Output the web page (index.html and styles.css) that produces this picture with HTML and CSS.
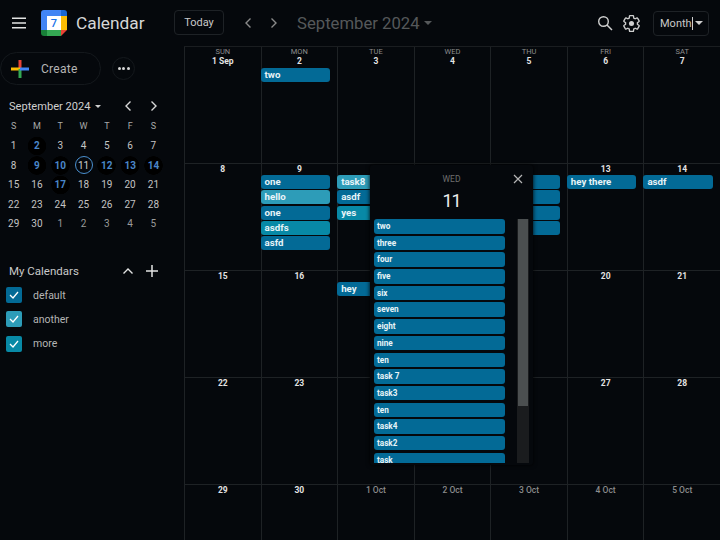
FILE: index.html
```html
<!DOCTYPE html>
<html>
<head>
    <meta http-equiv="Content-Type" content="text/html; charset=UTF-8">
    <title>Calendar</title>
    <link rel="stylesheet" href="styles.css">
</head>
<body>
<header class="topbar">
    <svg class="menu-icon" width="16" height="12" viewBox="0 0 16 12"><path d="M1 1.200h14M1 6h14M1 10.800h14" stroke="#e3e3e3" stroke-width="1.600"/></svg>
    <svg class="logo" width="26" height="26" viewBox="0 0 26 26">
        <path d="M3 0h17v6H6v14H0V3a3 3 0 0 1 3-3z" fill="#4285f4"/>
        <path d="M20 0h3a3 3 0 0 1 3 3v3h-6z" fill="#1967d2"/>
        <rect x="20" y="6" width="6" height="14" fill="#fbbc04"/>
        <path d="M0 20h6v6H3a3 3 0 0 1-3-3z" fill="#188038"/>
        <rect x="6" y="20" width="14" height="6" fill="#34a853"/>
        <path d="M20 20h6l-6 6z" fill="#ea4335"/>
        <rect x="6" y="6" width="14" height="14" fill="#fff"/>
        <text x="13" y="17" text-anchor="middle" class="logo-num">7</text>
    </svg>
    <span class="brand">Calendar</span>
    <button class="btn btn-today">Today</button>
    <svg class="nav-arrow first" width="8" height="12" viewBox="0 0 8 12"><path d="M6.500 1.500L2 6l4.500 4.500" fill="none" stroke="#8a8a8a" stroke-width="1.400"/></svg>
    <svg class="nav-arrow" width="8" height="12" viewBox="0 0 8 12"><path d="M1.500 1.500L6 6l-4.500 4.500" fill="none" stroke="#8a8a8a" stroke-width="1.400"/></svg>
    <span class="title">September 2024</span>
    <span class="caret caret-dim"></span>
    <svg class="search-icon" width="16" height="16" viewBox="0 0 16 16"><circle cx="6.500" cy="6.500" r="4.800" fill="none" stroke="#cfcfcf" stroke-width="1.400"/><path d="M10 10l5 5" stroke="#cfcfcf" stroke-width="1.500"/></svg>
    <svg class="gear-icon" width="19" height="19" viewBox="0 0 24 24"><path d="M19.430 12.980c.040-.320.070-.640.070-.980s-.030-.660-.070-.980l2.110-1.650c.190-.150.240-.420.120-.640l-2-3.460c-.120-.220-.390-.300-.610-.220l-2.490 1c-.520-.400-1.080-.730-1.690-.980l-.380-2.650C14.460 2.180 14.250 2 14 2h-4c-.250 0-.460.180-.490.420l-.380 2.650c-.610.250-1.170.590-1.690.980l-2.490-1c-.230-.090-.490 0-.610.220l-2 3.460c-.130.220-.070.490.120.640l2.110 1.650c-.040.320-.070.650-.070.980s.030.660.070.980l-2.110 1.650c-.190.150-.240.420-.120.640l2 3.460c.120.220.390.300.610.220l2.490-1c.520.400 1.080.730 1.690.980l.380 2.650c.030.240.240.420.490.420h4c.250 0 .460-.180.490-.420l.380-2.650c.610-.250 1.170-.590 1.690-.980l2.490 1c.230.090.490 0 .610-.220l2-3.460c.120-.220.070-.490-.120-.640l-2.110-1.650z" fill="none" stroke="#cfcfcf" stroke-width="1.700"/><circle cx="12" cy="12" r="3.200" fill="#cfcfcf"/></svg>
    <button class="btn btn-month"><span class="month-text">Month</span><span class="caret"></span></button>
</header>
<div class="main">
    <aside class="sidebar">
        <div class="create-row">
            <button class="create">
                <svg width="20" height="20" viewBox="0 0 20 20">
                    <rect x="8.500" y="1" width="3" height="9" fill="#ea4335"/>
                    <rect x="1" y="8.500" width="9" height="3" fill="#fbbc04"/>
                    <rect x="8.500" y="10" width="3" height="9" fill="#34a853"/>
                    <rect x="10" y="8.500" width="9" height="3" fill="#4285f4"/>
                </svg>
                <span>Create</span>
            </button>
            <button class="more"><i></i><i></i><i></i></button>
        </div>
        <div class="mini-head">
            <span class="mini-title">September 2024</span>
            <span class="caret caret-small"></span>
            <svg class="mini-prev" width="8" height="12" viewBox="0 0 8 12"><path d="M6.500 1.500L2 6l4.500 4.500" fill="none" stroke="#d8d8d8" stroke-width="1.400"/></svg>
            <svg class="mini-next" width="8" height="12" viewBox="0 0 8 12"><path d="M1.500 1.500L6 6l-4.500 4.500" fill="none" stroke="#d8d8d8" stroke-width="1.400"/></svg>
        </div>
        <div class="mini-grid">
            <span class="wd">S</span><span class="wd">M</span><span class="wd">T</span><span class="wd">W</span><span class="wd">T</span><span class="wd">F</span><span class="wd">S</span>
            <span>1</span><span class="has">2</span><span>3</span><span>4</span><span>5</span><span>6</span><span>7</span>
            <span>8</span><span class="has">9</span><span class="has">10</span><span class="now">11</span><span class="has">12</span><span class="has">13</span><span class="has">14</span>
            <span>15</span><span>16</span><span class="has">17</span><span>18</span><span>19</span><span>20</span><span>21</span>
            <span>22</span><span>23</span><span>24</span><span>25</span><span>26</span><span>27</span><span>28</span>
            <span>29</span><span>30</span><span class="off">1</span><span class="off">2</span><span class="off">3</span><span class="off">4</span><span class="off">5</span>
        </div>
        <div class="cal-head">
            <span class="cal-title">My Calendars</span>
            <svg class="cal-up" width="12" height="8" viewBox="0 0 12 8"><path d="M1.500 6.500L6 2l4.500 4.500" fill="none" stroke="#e3e3e3" stroke-width="1.400"/></svg>
            <svg class="cal-add" width="12" height="12" viewBox="0 0 12 12"><path d="M6 0v12M0 6h12" stroke="#e3e3e3" stroke-width="1.500"/></svg>
        </div>
        <label class="cal-item"><span class="check c-blue"><svg width="10" height="8" viewBox="0 0 10 8"><path d="M1 4l3 3 5-6" fill="none" stroke="#fff" stroke-width="1.300"/></svg></span>default</label>
        <label class="cal-item"><span class="check c-light"><svg width="10" height="8" viewBox="0 0 10 8"><path d="M1 4l3 3 5-6" fill="none" stroke="#fff" stroke-width="1.300"/></svg></span>another</label>
        <label class="cal-item"><span class="check c-teal"><svg width="10" height="8" viewBox="0 0 10 8"><path d="M1 4l3 3 5-6" fill="none" stroke="#fff" stroke-width="1.300"/></svg></span>more</label>
    </aside>
    <section class="month">
        <div class="cell"><div class="dow">SUN</div><div class="num">1 Sep</div></div>
        <div class="cell"><div class="dow">MON</div><div class="num">2</div><div class="ev">two</div></div>
        <div class="cell"><div class="dow">TUE</div><div class="num">3</div></div>
        <div class="cell"><div class="dow">WED</div><div class="num">4</div></div>
        <div class="cell"><div class="dow">THU</div><div class="num">5</div></div>
        <div class="cell"><div class="dow">FRI</div><div class="num">6</div></div>
        <div class="cell"><div class="dow">SAT</div><div class="num">7</div></div>

        <div class="cell"><div class="num">8</div></div>
        <div class="cell"><div class="num">9</div><div class="ev">one</div><div class="ev light">hello</div><div class="ev">one</div><div class="ev teal">asdfs</div><div class="ev">asfd</div></div>
        <div class="cell"><div class="num"></div><div class="ev light">task8</div><div class="ev">asdf</div><div class="ev teal">yes</div></div>
        <div class="cell"><div class="num"></div></div>
        <div class="cell"><div class="num"></div><div class="ev"></div><div class="ev"></div><div class="ev"></div><div class="ev"></div></div>
        <div class="cell"><div class="num">13</div><div class="ev">hey there</div></div>
        <div class="cell"><div class="num">14</div><div class="ev">asdf</div></div>

        <div class="cell"><div class="num">15</div></div>
        <div class="cell"><div class="num">16</div></div>
        <div class="cell"><div class="num"></div><div class="ev">hey</div></div>
        <div class="cell"><div class="num"></div></div>
        <div class="cell"><div class="num"></div></div>
        <div class="cell"><div class="num">20</div></div>
        <div class="cell"><div class="num">21</div></div>

        <div class="cell"><div class="num">22</div></div>
        <div class="cell"><div class="num">23</div></div>
        <div class="cell"><div class="num"></div></div>
        <div class="cell"><div class="num"></div></div>
        <div class="cell"><div class="num"></div></div>
        <div class="cell"><div class="num">27</div></div>
        <div class="cell"><div class="num">28</div></div>

        <div class="cell"><div class="num">29</div></div>
        <div class="cell"><div class="num">30</div></div>
        <div class="cell"><div class="num dim">1 Oct</div></div>
        <div class="cell"><div class="num dim">2 Oct</div></div>
        <div class="cell"><div class="num dim">3 Oct</div></div>
        <div class="cell"><div class="num dim">4 Oct</div></div>
        <div class="cell"><div class="num dim">5 Oct</div></div>
    </section>
</div>
<div class="popup">
    <svg class="popup-close" width="10" height="10" viewBox="0 0 10 10"><path d="M1 1l8 8M9 1l-8 8" stroke="#b5b5b5" stroke-width="1.200"/></svg>
    <div class="popup-dow">WED</div>
    <div class="popup-num">11</div>
    <div class="popup-body">
        <div class="popup-list">
            <div class="pev">two</div>
            <div class="pev">three</div>
            <div class="pev">four</div>
            <div class="pev">five</div>
            <div class="pev">six</div>
            <div class="pev">seven</div>
            <div class="pev">eight</div>
            <div class="pev">nine</div>
            <div class="pev">ten</div>
            <div class="pev">task 7</div>
            <div class="pev">task3</div>
            <div class="pev">ten</div>
            <div class="pev">task4</div>
            <div class="pev">task2</div>
            <div class="pev">task</div>
        </div>
        <div class="scrollbar"><div class="thumb"></div></div>
    </div>
</div>
</body>
</html>
```

FILE: styles.css
```css
html, body{height:100%;}
body{margin:0; background:#05080c; color:#e3e3e3; font-family:Roboto, "Liberation Sans", sans-serif; overflow:hidden;}
button{font-family:inherit; background:none; color:inherit; padding:0;}

.topbar{height:46px; display:flex; align-items:center; box-sizing:border-box; padding-left:11px;}
.menu-icon{margin-right:14px; flex:none;}
.logo{flex:none; margin-top:-1px;}
.logo-num{font:500 11px Roboto, sans-serif; fill:#1a73e8;}
.brand{font-size:17.300px; color:#d6d6d6; margin-left:9px; width:90px; flex:none;}
.btn{border:1px solid #1e2226; border-radius:4px; height:25px; box-sizing:border-box; font-size:11px; color:#c9c9c9;}
.btn-today{width:50px; margin-left:8px; margin-top:-1px; flex:none;}
.nav-arrow{margin-left:18px; flex:none;}
.nav-arrow.first{margin-left:20px;}
.nav-arrow + .title{margin-left:19px;}
.title{font-size:16.700px; color:#55585a; width:123px; white-space:nowrap; flex:none;}
.caret{display:inline-block; width:0; height:0; border:4px solid transparent; border-top-color:#cfcfcf; border-bottom:0;}
.caret-dim{border-top-color:#55585a; margin-left:4px;}
.caret-small{border-width:3px; border-bottom:0; margin-left:4px;}
.search-icon{margin-left:auto;}
.gear-icon{margin-left:9px;}
.btn-month{width:56px; margin:0 11px 0 12px; display:flex; align-items:center; justify-content:space-between; padding:0 5px 0 6px;}
.month-text{border-right:1px solid #cfcfcf; line-height:13px;}

.main{display:flex; height:494px;}
.sidebar{width:184px; flex:none; box-sizing:border-box;}
.create-row{display:flex; align-items:center; margin-top:6px; height:33px;}
.create{width:101px; height:33px; border:1px solid #14181c; border-radius:17px; display:flex; align-items:center; padding-left:9px; box-sizing:border-box; font-size:12px; color:#b5b5b5;}
.create span{margin-left:11px; letter-spacing:.3px;}
.more{width:23px; height:23px; margin-left:11px; border:1px solid #14181c; border-radius:50%; display:flex; align-items:center; justify-content:center; gap:1.500px;}
.more i{width:3px; height:3px; border-radius:50%; background:#d6d6d6;}

.mini-head{display:flex; align-items:center; height:20px; margin-top:11px; padding-left:9px;}
.mini-title{font-size:11.100px; color:#cfcfcf;}
.mini-prev{margin-left:23px;}
.mini-next{margin-left:18px;}
.mini-grid{display:grid; grid-template-columns:repeat(7,23.300px); grid-auto-rows:19.500px; padding-left:2px; margin-top:.5px; font-size:10px; color:#c4c4c4; text-align:center;}
.mini-grid span{display:flex; align-items:center; justify-content:center;}
.mini-grid .wd{color:#a8a8a8; font-size:9px;}
.mini-grid .off{color:#9a9a9a;}
.mini-grid .has{color:#4a86c8; font-weight:700; background:radial-gradient(circle, #000 9px, transparent 9.500px);}
.mini-grid .now{width:18px; height:18px; margin:auto; border:1.500px solid #4a90d0; border-radius:50%; box-sizing:border-box; color:#cfcfcf;}

.cal-head{display:flex; align-items:center; margin-top:27.500px; margin-bottom:2px; padding-left:9px; height:20px;}
.cal-title{font-size:11.500px; color:#c9c9c9; width:113px;}
.cal-add{margin-left:12px;}
.cal-item{display:flex; align-items:center; height:24.300px; padding-left:6px; font-size:10.500px; color:#b5b5b5;}
.check{width:16px; height:16px; border-radius:2px; display:flex; align-items:center; justify-content:center; margin-right:11px;}
.c-blue{background:#036a96;}
.c-light{background:#2d9cb8;}
.c-teal{background:#0889a6;}

.month{flex:1; display:grid; grid-template-columns:repeat(7,1fr); grid-template-rows:117px repeat(3,107px) 56px; border-top:1px solid #1a1d20;}
.cell{border-left:1px solid #1e2225; border-bottom:1px solid #1e2225; box-sizing:border-box; min-width:0;}
.dow{font-size:7.500px; color:#8c8c8c; text-align:center; line-height:9px;}
.dow + .num{margin-bottom:1px;}
.num{font-size:8.500px; font-weight:700; color:#e3e3e3; text-align:center; height:11px; line-height:11px;}
.num.dim{color:#8c8c8c; font-weight:500;}
.ev{height:14px; line-height:14px; margin:0 7px 1.300px -1px; padding-left:4px; border-radius:3px; background:#036a96; color:#e8f4f8; font-size:9.700px; font-weight:700;}
.ev.light{background:#2d9cb8;}
.ev.teal{background:#0889a6;}

.popup{position:absolute; left:370px; top:165px; width:163px; height:300px; box-sizing:border-box; background:#05080c; border-radius:3px; box-shadow:0 0 4px #000; padding:0 4px;}
.popup-close{position:absolute; left:143px; top:9px;}
.popup-dow{font-size:8.500px; color:#6f6f6f; text-align:center; margin-top:9px; line-height:10px;}
.popup-num{font-size:18px; letter-spacing:-1px; color:#eee; text-align:center; line-height:22px; margin-top:6px;}
.popup-body{display:flex; height:244px; margin-top:7px;}
.popup-list{width:131px; overflow:hidden; flex:none;}
.pev{height:14.500px; line-height:14.500px; margin-bottom:2.200px; padding-left:3px; border-radius:3px; background:#036a96; color:#e8f4f8; font-size:8.200px; font-weight:700;}
.scrollbar{width:13px; margin-left:12px; background:#1a1c1e;}
.thumb{height:187px; margin:0 1px; background:#4b4f50;}
```
